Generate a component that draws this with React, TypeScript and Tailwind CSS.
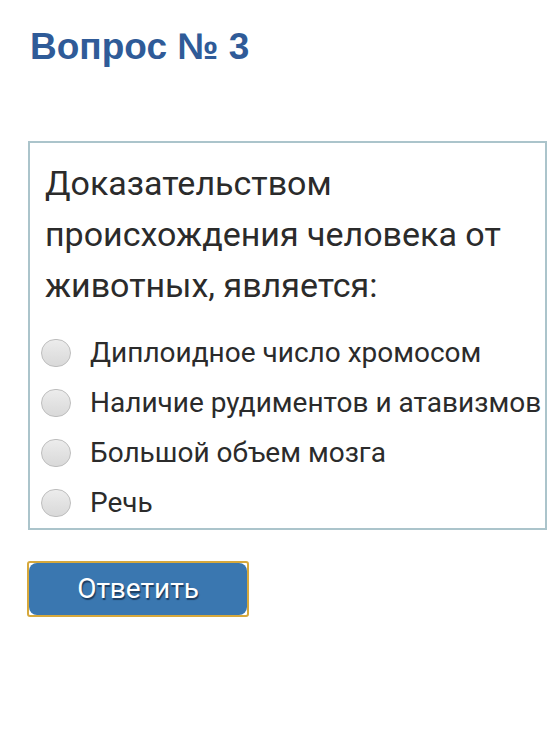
import React from "react";

const options = [
  "Диплоидное число хромосом",
  "Наличие рудиментов и атавизмов",
  "Большой объем мозга",
  "Речь",
];

export default function App() {
  return (
    <div className="w-[553px] h-[742px] bg-white overflow-hidden" style={{ fontFamily: "Roboto, 'Noto Sans', sans-serif" }}>
      <div className="pl-[30px] pt-[27px]">
        <h1 className="text-[37px] leading-[40px] font-bold text-[#2f5b98]" style={{ fontFamily: "'Liberation Sans', Arial, sans-serif" }}>
          Вопрос № 3
        </h1>
      </div>
      <div className="ml-[28px] mt-[74px] w-[519px] border-2 border-[#abc4cb]">
        <div className="pl-[15px] pr-[4px] pt-[15px] text-[34px] leading-[51px] text-[#2b2b2b]">
          Доказательством происхождения человека от животных, является:
        </div>
        <div className="mt-[17px] flex flex-col">
          {options.map((o) => (
            <label key={o} className="h-[50px] flex items-center pl-[11px]">
              <span className="w-[30px] h-[28px] rounded-full border border-[#bdbdbd] bg-gradient-to-b from-[#ececec] to-[#d9d9d9] shrink-0" />
              <span className="ml-[19px] text-[28px] leading-[30px] text-[#2b2b2b] whitespace-nowrap">{o}</span>
            </label>
          ))}
        </div>
      </div>
      <div className="ml-[27px] mt-[31px] w-[222px] h-[56px] border-2 border-[#d6a83c] rounded-[3px] bg-white">
        <div className="w-full h-full rounded-[8px] bg-[#3a77b0] flex items-center justify-center">
          <span className="text-[28px] text-white" style={{ textShadow: "1px 2px 1px #1d3d60" }}>Ответить</span>
        </div>
      </div>
    </div>
  );
}
